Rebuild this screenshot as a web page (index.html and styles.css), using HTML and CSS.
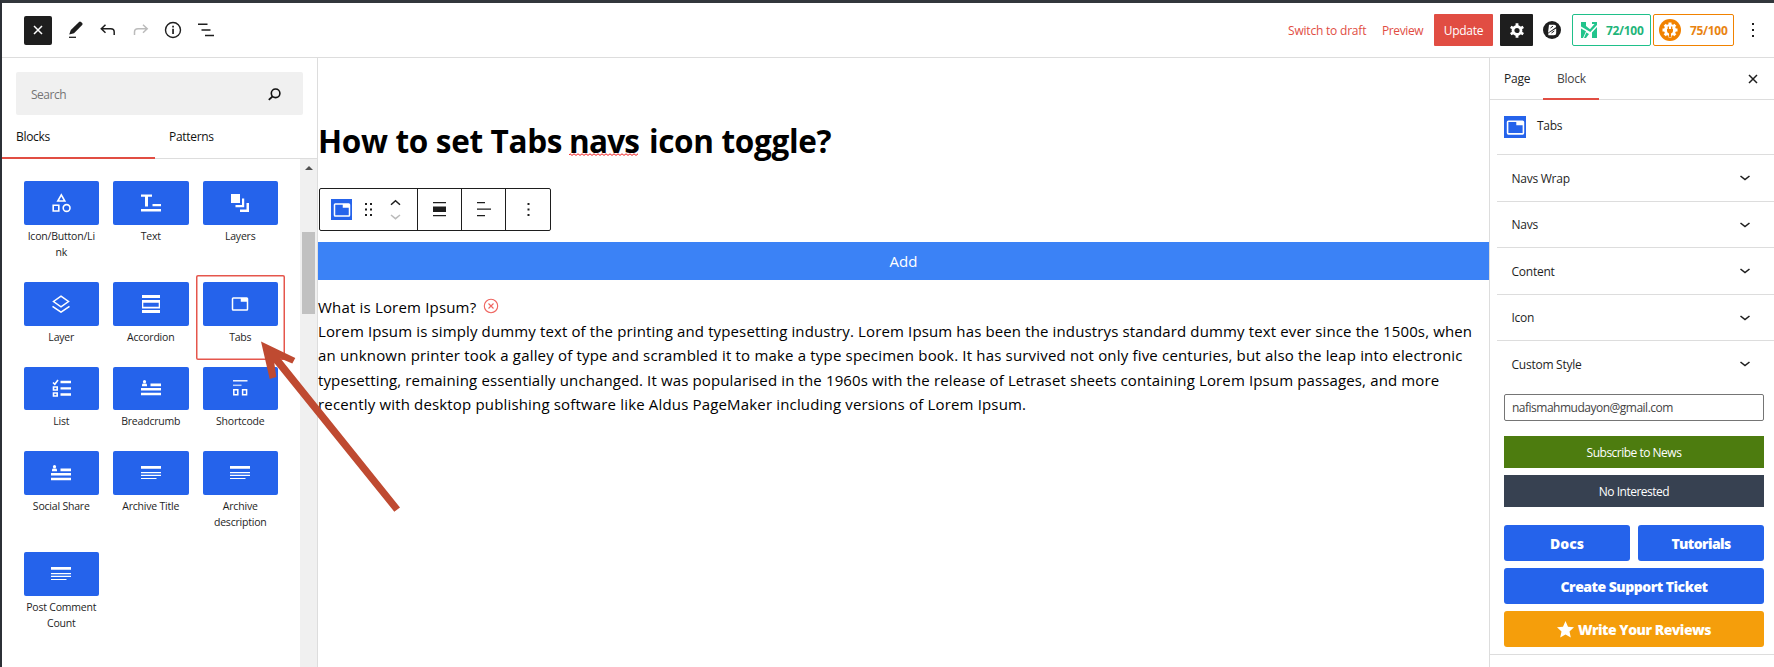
FILE: index.html
```html
<!DOCTYPE html>
<html lang="en">
<head>
<meta charset="utf-8">
<title>Edit Page</title>
<link rel="stylesheet" href="styles.css">
</head>
<body>
<svg class="defs" width="0" height="0">
  <symbol id="tabs" viewBox="0 0 24 24"><path fill-rule="evenodd" d="M3 3h18a2 2 0 0 1 2 2v14a2 2 0 0 1-2 2H3a2 2 0 0 1-2-2V5a2 2 0 0 1 2-2zm0 2v14h18V9h-8V5z"/></symbol>
  <symbol id="chev" viewBox="0 0 12 8"><path d="M1.500 2 6 5.600 10.500 2" fill="none" stroke="#1e1e1e" stroke-width="1.600"/></symbol>
  <symbol id="crumb" viewBox="0 0 20 16"><circle cx="3.500" cy="1.700" r="1.600"/><path d="M1 6.200V5q0-1.400 1.500-1.400h2Q6 3.600 6 5v1.200zM9.500 3.500H20v2.700H9.500zM0 8h20v2.500H0zM0 12.800h20v2.500H0z"/></symbol>
  <symbol id="lines" viewBox="0 0 20 14"><path d="M0 0h20v2.700H0zM0 6h20v1.200H0zM0 8.700h20v1.300H0zM0 11.900h15.500v1.200H0z"/></symbol>
</svg>
<div class="app">
  <header class="topbar">
    <div class="tools">
      <button class="close-btn"><svg width="10" height="10" viewBox="0 0 10 10"><path d="M1 1l8 8M9 1 1 9" stroke="#fff" stroke-width="1.500"/></svg></button>
      <svg class="pencil" width="16" height="18" viewBox="0 0 16 18"><path d="M1.200 13.500 2.800 9 11 .9q1-.9 2 0l1.200 1.200q.9 1 0 2L6 12.200z" fill="#1e1e1e"/><path d="M1 16.300h7" stroke="#1e1e1e" stroke-width="1.300"/></svg>
      <svg class="undo" width="16" height="12" viewBox="0 0 16 12"><path d="M5.500.8 1.300 4.800l4.200 4M1.500 4.800h9.200q3.500 0 3.500 3.200v3" fill="none" stroke="#1e1e1e" stroke-width="1.500"/></svg>
      <svg class="redo" width="16" height="12" viewBox="0 0 16 12"><path d="M10 .8l4.200 4-4.200 4M14 4.800H5Q1.500 4.800 1.500 8v3" fill="none" stroke="#bbb" stroke-width="1.500"/></svg>
      <svg class="info" width="18" height="18" viewBox="0 0 18 18"><circle cx="9" cy="9" r="7.500" fill="none" stroke="#1e1e1e" stroke-width="1.400"/><path d="M8.200 7.800h1.700v5.200H8.200zM8.200 4.700h1.700v1.800H8.200z" fill="#1e1e1e"/></svg>
      <svg class="outline" width="16" height="14" viewBox="0 0 16 14"><path d="M0 1.300h9.500M3.500 7h9M7 12.500h9" stroke="#1e1e1e" stroke-width="1.500"/></svg>
    </div>
    <div class="actions">
      <span class="link draft">Switch to draft</span>
      <span class="link preview">Preview</span>
      <button class="update"><span>Update</span></button>
      <button class="gear"><svg width="14" height="15" viewBox="0 0 14 15"><circle cx="7" cy="7.500" r="4" fill="none" stroke="#fff" stroke-width="2.800"/><path d="M7 .2v3M7 11.800v3M.7 3.900l2.500 1.400M10.800 9.700l2.500 1.400M.7 11.100l2.500-1.400M10.800 5.300l2.500-1.400" stroke="#fff" stroke-width="2.800"/></svg></button>
      <svg class="blogo" width="18" height="18" viewBox="0 0 18 18"><circle cx="9" cy="9" r="9" fill="#1e1e1e"/><path d="M6 3.800h5.200q2 0 2 2.200L5 11.800zM13.200 7.500v4.200q0 2.500-2.500 2.500H5.500q-.8-1.200.2-2.200z" fill="#fff"/><path d="M7.500 7 10 5.200M8.500 12l2.800-2" stroke="#1e1e1e" stroke-width="1"/></svg>
      <div class="score green"><svg width="16" height="17" viewBox="0 0 16 17"><path d="M0 0h5v4L9 7.300 13.500 2H11V0h5v3L9.300 10 0 4.500z"/><path d="M0 6.500 5 9.200 2 16H0zM5.300 10.500 8 12l-3 4H3zM11 10.500 16 5v11h-5z"/></svg><span>72/100</span></div>
      <div class="score orange"><svg width="22" height="22" viewBox="0 0 22 22"><circle cx="11" cy="11" r="11" fill="#f18200"/><circle cx="11" cy="11" r="6" fill="#fff"/><path d="M11 3.500v15M3.500 11h15M5.700 5.700l10.600 10.600M16.300 5.700 5.700 16.300" stroke="#fff" stroke-width="3"/><path d="M9.300 7.500v3M12.700 7.500v3" stroke="#f18200" stroke-width="1.300"/><path d="M8 10h6v2q0 2-2 2.400V18h-2v-3.600Q8 14 8 12z" fill="#f18200"/></svg><span>75/100</span></div>
      <svg class="more" width="4" height="14" viewBox="0 0 4 14"><path d="M1 0h2v2H1zM1 6h2v2H1zM1 12h2v2H1z" fill="#1e1e1e"/></svg>
    </div>
  </header>
  <div class="body">
    <aside class="inserter">
      <div class="search"><span>Search</span><svg width="13" height="13" viewBox="0 0 13 13"><circle cx="7.600" cy="5.300" r="4.300" fill="none" stroke="#111" stroke-width="1.600"/><path d="M4.600 8.300.8 11.900" stroke="#111" stroke-width="1.800"/></svg></div>
      <div class="itabs"><div class="itab on"><span>Blocks</span></div><div class="itab"><span>Patterns</span></div></div>
      <div class="scroll">
        <div class="grid">
          <div class="item"><div class="tile"><svg width="19" height="20" viewBox="0 0 19 20"><path d="M9.300 1.800 5.800 8h7zM1.200 12.200h5.600v5.800H1.200z" fill="none" stroke="#fff" stroke-width="1.600"/><circle cx="14.600" cy="15" r="3.400" fill="none" stroke="#fff" stroke-width="1.600"/></svg></div><span>Icon/Button/Li<br>nk</span></div>
          <div class="item"><div class="tile"><svg width="20" height="18" viewBox="0 0 20 18"><path d="M0 .5h11v2.300H7v9.700H4V2.800H0zM11.500 10H20v2.300h-8.500zM0 15h20v2.500H0z"/></svg></div><span>Text</span></div>
          <div class="item"><div class="tile"><svg width="18" height="18" viewBox="0 0 18 18"><path d="M0 0h9v9H0zM11 4.500h2.200v8.700H4.500V11H11zM15.500 9H18v9H9v-2.500h6.500z"/></svg></div><span>Layers</span></div>
          <div class="item"><div class="tile"><svg width="18" height="18" viewBox="0 0 18 18"><path d="M9 1.100 16.500 6.500 9 11.900 1.500 6.500z" fill="none" stroke="#fff" stroke-width="1.500"/><path d="M.5 11.300 9 17.100l8.500-5.800" fill="none" stroke="#fff" stroke-width="1.600"/></svg></div><span>Layer</span></div>
          <div class="item"><div class="tile"><svg width="18" height="18" viewBox="0 0 18 18"><path fill-rule="evenodd" d="M0 0h18v3H0zM0 15h18v3H0zM0 5h18v8.500H0zM1.300 7.800v3.900h15.400V7.800z"/></svg></div><span>Accordion</span></div>
          <div class="item sel"><div class="tile"><svg width="18" height="18"><use href="#tabs"/></svg></div><span>Tabs</span></div>
          <div class="item"><div class="tile"><svg width="19" height="19" viewBox="0 0 19 19"><path d="M1 3.500l1.800 1.800L6 1M1.500 8h3.700v3H1.500zM1.500 14h3.700v3H1.500z" fill="none" stroke="#fff" stroke-width="1.600"/><path d="M8.500 3H19M8.500 9.300H19M8.500 15.500H19" stroke="#fff" stroke-width="2.300"/></svg></div><span>List</span></div>
          <div class="item"><div class="tile"><svg width="20" height="16"><use href="#crumb"/></svg></div><span>Breadcrumb</span></div>
          <div class="item"><div class="tile"><svg width="15" height="16" viewBox="0 0 15 16"><path d="M0 .8h14.500" stroke="#fff" stroke-width="1.400"/><path d="M0 5.300h8.500" stroke="#bcd0fa" stroke-width="1.500"/><path d="M.8 9.800h4v5h-4zM9.600 9.800h4v5h-4z" fill="none" stroke="#fff" stroke-width="1.500"/></svg></div><span>Shortcode</span></div>
          <div class="item"><div class="tile"><svg width="20" height="16"><use href="#crumb"/></svg></div><span>Social Share</span></div>
          <div class="item"><div class="tile"><svg width="20" height="14"><use href="#lines"/></svg></div><span>Archive Title</span></div>
          <div class="item"><div class="tile"><svg width="20" height="14"><use href="#lines"/></svg></div><span>Archive<br>description</span></div>
          <div class="item"><div class="tile"><svg width="20" height="14"><use href="#lines"/></svg></div><span>Post Comment<br>Count</span></div>
        </div>
        <div class="bar"><div class="up"></div><div class="thumb"></div></div>
      </div>
    </aside>
    <main class="canvas">
      <h1>How to set Tabs <span class="typo">navs<svg width="69" height="3" viewBox="0 0 69 3"><path d="M0 2 1 .8 3 2.400 5 .8 7 2.400 9 .8 11 2.400 13 .8 15 2.400 17 .8 19 2.400 21 .8 23 2.400 25 .8 27 2.400 29 .8 31 2.400 33 .8 35 2.400 37 .8 39 2.400 41 .8 43 2.400 45 .8 47 2.400 49 .8 51 2.400 53 .8 55 2.400 57 .8 59 2.400 61 .8 63 2.400 65 .8 67 2.400 69 .8" fill="none" stroke="#f02020" stroke-width="1"/></svg></span> icon toggle?</h1>
      <div class="btoolbar">
        <div class="seg first">
          <span class="chip"><svg width="18" height="18"><use href="#tabs"/></svg></span>
          <svg class="drag" width="7" height="14" viewBox="0 0 7 14"><path d="M0 0h2v2H0zM5 0h2v2H5zM0 5.500h2v2H0zM5 5.500h2v2H5zM0 11h2v2H0zM5 11h2v2H5z" fill="#1e1e1e"/></svg>
          <svg class="mover" width="11" height="21" viewBox="0 0 11 21"><path d="M1 5.700 5.500 1.700 10 5.700" fill="none" stroke="#1e1e1e" stroke-width="1.500"/><path d="M1 16l4.500 3.700L10 16" fill="none" stroke="#bbb" stroke-width="1.500"/></svg>
        </div>
        <div class="seg"><svg width="13" height="15" viewBox="0 0 13 15"><path d="M0 0h13v1.300H0zM0 4.500h13v5.500H0zM0 13h13v1.300H0z" fill="#1e1e1e"/></svg></div>
        <div class="seg"><svg width="14" height="15" viewBox="0 0 14 15"><path d="M0 0h8v1.300H0zM0 6.500h14v1.300H0zM0 13h8v1.300H0z" fill="#1e1e1e"/></svg></div>
        <div class="seg last"><svg width="3" height="14" viewBox="0 0 3 14"><path d="M.5 0h2v2h-2zM.5 5.500h2v2h-2zM.5 11h2v2h-2z" fill="#1e1e1e"/></svg></div>
      </div>
      <button class="add"><span>Add</span></button>
      <div class="copy">
        <div class="q"><span>What is Lorem Ipsum?</span><svg width="16" height="16" viewBox="0 0 16 16"><circle cx="8" cy="8" r="6.700" fill="none" stroke="#ef6560" stroke-width="1.100"/><path d="M5.500 5.500l5 5M10.500 5.500l-5 5" stroke="#ef6560" stroke-width="1.100"/></svg></div>
        <p><span class="l1">Lorem Ipsum is simply dummy text of the printing and typesetting industry. Lorem Ipsum has been the industrys standard dummy text ever since the 1500s, when</span><br>
        <span class="l2">an unknown printer took a galley of type and scrambled it to make a type specimen book. It has survived not only five centuries, but also the leap into electronic</span><br>
        <span class="l3">typesetting, remaining essentially unchanged. It was popularised in the 1960s with the release of Letraset sheets containing Lorem Ipsum passages, and more</span><br>
        <span class="l4">recently with desktop publishing software like Aldus PageMaker including versions of Lorem Ipsum.</span></p>
      </div>
    </main>
    <aside class="settings">
      <div class="stabs"><div class="stab">Page</div><div class="stab on">Block</div><svg width="10" height="10" viewBox="0 0 10 10"><path d="M1 1l8 8M9 1 1 9" stroke="#1e1e1e" stroke-width="1.500"/></svg></div>
      <div class="card"><span class="chip"><svg width="19" height="19"><use href="#tabs"/></svg></span><span>Tabs</span></div>
      <div class="panels">
        <div class="panel"><span>Navs Wrap</span><svg width="12" height="8"><use href="#chev"/></svg></div>
        <div class="panel"><span>Navs</span><svg width="12" height="8"><use href="#chev"/></svg></div>
        <div class="panel"><span>Content</span><svg width="12" height="8"><use href="#chev"/></svg></div>
        <div class="panel"><span>Icon</span><svg width="12" height="8"><use href="#chev"/></svg></div>
        <div class="panel"><span>Custom Style</span><svg width="12" height="8"><use href="#chev"/></svg></div>
      </div>
      <div class="news">
        <div class="email"><span>nafismahmudayon@gmail.com</span></div>
        <button class="flat olive"><span>Subscribe to News</span></button>
        <button class="flat navy"><span>No Interested</span></button>
      </div>
      <div class="help">
        <button class="big"><span>Docs</span></button>
        <button class="big tut"><span>Tutorials</span></button>
        <button class="big wide"><span>Create Support Ticket</span></button>
        <button class="big wide amber"><svg width="17" height="17" viewBox="0 0 17 17"><path d="M8.500 0 11 5.700l6 .6-4.500 4.100L13.800 16.500 8.500 13.400 3.200 16.500 4.500 10.400 0 6.300l6-.6z" fill="#fff"/></svg><span>Write Your Reviews</span></button>
      </div>
    </aside>
  </div>
  <div class="marker"></div>
  <svg class="arrow" width="142" height="174" viewBox="260 340 142 174"><path d="M261 341.500 295.300 358 292.300 363.500 280.500 358.500 400 507.500 394.300 511.700 274.300 363 276.300 377 269.700 379z" fill="#bf4a31"/></svg>
</div>
</body>
</html>
```
FILE: styles.css
```css
* { box-sizing: border-box; }
body { margin: 0; font-family: "Open Sans", "Noto Sans", sans-serif; font-size: 12px; color: #1e1e1e; }
button { border: 0; padding: 0; font: inherit; color: #fff; display: flex; align-items: center; justify-content: center; }
svg { display: block; flex: none; }
span { white-space: nowrap; }
.defs { position: absolute; }
.app { position: relative; width: 1774px; height: 667px; overflow: hidden; background: #fff; border-top: 3px solid #32373c; border-left: 2px solid #2c3036; display: flex; flex-direction: column; }

.topbar { height: 55px; flex: none; border-bottom: 1px solid #ddd; display: flex; justify-content: space-between; padding: 0 19px 0 22px; }
.tools { display: flex; align-items: center; }
.close-btn { width: 28px; height: 29px; background: #1e1e1e; border-radius: 2px; }
.pencil { margin-left: 16px; }
.undo { margin-left: 16px; }
.redo { margin-left: 17px; }
.info { margin-left: 15px; }
.outline { margin-left: 16px; }
.actions { display: flex; align-items: center; }
.link { color: #e14d43; letter-spacing: -0.2px; }
.draft { width: 93px; }
.preview { width: 53px; letter-spacing: -0.4px; padding-left: 1px; }
.update { width: 59px; height: 32px; background: #e14d43; border-radius: 1px; letter-spacing: -0.3px; }
.gear { width: 33px; height: 32px; background: #1e1e1e; border-radius: 1px; margin-left: 7px; }
.blogo { margin-left: 10px; }
.score { height: 32px; border: 1px solid; border-radius: 2px; display: flex; align-items: center; font-weight: 700; letter-spacing: -0.3px; }
.green { width: 79px; margin-left: 11px; padding-left: 8px; gap: 9px; color: #1fb57a; border-color: #1fc08a; fill: #22c48c; }
.orange { width: 81px; margin-left: 2px; padding-left: 5px; gap: 9px; color: #e98411; border-color: #f18200; }
.more { margin-left: 17px; }

.body { flex: 1; display: flex; min-height: 0; }
.inserter { width: 316px; flex: none; border-right: 1px solid #ddd; display: flex; flex-direction: column; }
.search { margin: 14px 14px 0; width: 287px; height: 43px; background: #f0f0f0; border-radius: 2px; display: flex; align-items: center; justify-content: space-between; padding: 1px 22px 0 15px; color: #757575; letter-spacing: -0.5px; }
.itabs { display: flex; height: 44px; border-bottom: 1px solid #ddd; flex: none; }
.itab { width: 152px; padding: 14px 0 0 14px; line-height: 16px; height: 44px; color: #111; letter-spacing: -0.3px; }
.itab.on { width: 153px; border-bottom: 2px solid #e14d43; }
.scroll { flex: 1; display: flex; justify-content: space-between; min-height: 0; }
.grid { display: grid; grid-template-columns: repeat(3, 89.500px); align-content: start; padding: 15px 0 0 14.500px; }
.item { padding: 7px; min-height: 84.500px; text-align: center; font-size: 10.500px; line-height: 16px; letter-spacing: -0.2px; }
.item:nth-child(-n+3), .item:nth-child(n+10) { min-height: 101px; }
.item > span { display: block; margin: 3px -6px 0; }
.sel { box-shadow: inset 0 0 0 1.500px #e5564c; border-radius: 2px; }
.tile { height: 43.500px; background: #2563eb; border-radius: 2px; display: flex; align-items: center; justify-content: center; fill: #fff; }
.bar { width: 17px; background: #f0f0f0; padding: 7px 2px 0; }
.up { width: 0; height: 0; margin: 0 auto; border: 4px solid transparent; border-top: 0; border-bottom-color: #505050; }
.thumb { height: 82px; margin-top: 62px; background: #c1c1c1; }

.canvas { width: 1171px; flex: none; color: #000; }
h1 { margin: 60px 0 0; font-size: 31.500px; line-height: 46px; font-weight: 700; white-space: nowrap; letter-spacing: -0.33px; }
.typo { position: relative; letter-spacing: -0.8px; margin: 0 2px 0 -1px; }
.typo svg { position: absolute; left: 0; bottom: 6px; }
.btoolbar { margin: 24px 0 0 1px; width: 232px; height: 43px; border: 1px solid #1e1e1e; border-radius: 2px; display: flex; }
.seg { width: 44px; border-right: 1px solid #1e1e1e; display: flex; align-items: center; justify-content: center; }
.seg.first { width: 98px; justify-content: flex-start; padding-left: 11px; }
.seg.last { border: 0; }
.chip { background: #2563eb; width: 21px; height: 21px; fill: #fff; display: flex; align-items: center; justify-content: center; flex: none; }
.drag { margin-left: 13px; }
.mover { margin-left: 18px; }
.add { width: 100%; height: 38px; margin-top: 11px; background: #3b82f6; font-size: 15px; }
.copy { margin-top: 15px; font-size: 15px; line-height: 24.300px; }
.q { display: flex; align-items: center; gap: 7px; height: 24px; }
.q span { letter-spacing: 0.18px; }
.q svg { margin-bottom: 2px; }
.copy p { margin: 0; white-space: nowrap; }
.l1, .l3 { letter-spacing: 0.130px; }
.l2 { letter-spacing: 0.180px; }
.l4 { letter-spacing: 0.165px; }

.settings { width: 285px; flex: none; border-left: 1px solid #ddd; letter-spacing: -0.25px; }
.stabs { display: flex; height: 42px; border-bottom: 1px solid #ddd; line-height: 41px; padding-left: 14px; align-items: center; }
.stab { width: 39px; height: 42px; }
.stab.on { width: 56px; padding-left: 14px; border-bottom: 2px solid #e14d43; color: #444; }
.stabs svg { margin-left: 149px; }
.card { display: flex; height: 54px; padding: 16px 0 0 14px; gap: 11px; line-height: 19px; }
.card .chip { width: 22px; height: 22px; }
.panels { margin-left: 7px; }
.panel { height: 46.500px; border-top: 1px solid #ddd; display: flex; align-items: center; justify-content: space-between; padding: 1px 23px 0 14.500px; }
.news { padding: 7.500px 10px 0 14px; letter-spacing: -0.5px; }
.email { height: 27px; border: 1px solid #757575; border-radius: 2px; padding-left: 7px; line-height: 26px; color: #444; }
.flat { width: 100%; height: 32px; letter-spacing: -0.5px; }
.olive { background: #4d7c0f; margin-top: 15px; }
.navy { background: #374151; margin-top: 7px; }
.help { display: grid; grid-template-columns: 1fr 1fr; gap: 7px 8px; padding: 18px 10px 7px 14px; border-bottom: 1px solid #ddd; }
.big { height: 36px; background: #2563eb; border-radius: 3px; font-size: 14px; font-weight: 800; gap: 4px; }
.tut { letter-spacing: -0.6px; }
.wide { grid-column: 1 / -1; letter-spacing: -0.5px; }
.amber { background: #f59e0b; }
.marker { position: absolute; left: -2px; top: 174px; width: 2px; height: 31px; background: linear-gradient(#e14d43 9px, #fff 9px 21px, #e14d43 21px); }
.arrow { position: absolute; left: 258px; top: 337px; }
```
